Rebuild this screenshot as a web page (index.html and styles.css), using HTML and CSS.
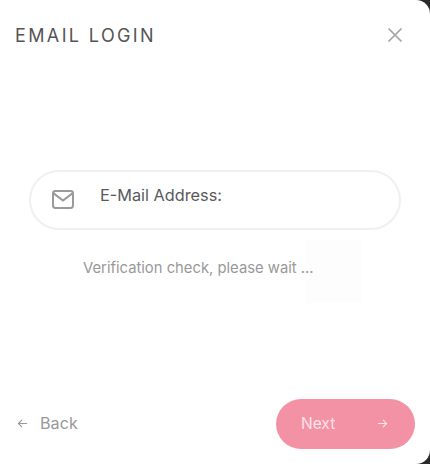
FILE: index.html
```html
<!DOCTYPE html>
<html lang="en">
<head>
<meta charset="utf-8">
<title>Email Login</title>
<link rel="stylesheet" href="styles.css">
</head>
<body>
<main class="modal">
  <header class="head">
    <h1 class="title">EMAIL LOGIN</h1>
    <button class="close" aria-label="Close">
      <svg class="close-icon" viewBox="0 0 16 16"><path d="M1.5 1.5l13 13M14.5 1.5l-13 13"/></svg>
    </button>
  </header>
  <section class="body">
    <div class="field">
      <svg class="mail-icon" viewBox="0 0 22 19"><rect x="1" y="1" width="20" height="17" rx="2.4"/><path d="M1.6 3.4L11 10.6l9.4-7.2"/></svg>
      <span class="label">E-Mail Address:</span>
    </div>
    <p class="status">Verification check, please wait ...</p>
    <div class="ghost"></div>
  </section>
  <footer class="foot">
    <button class="back">
      <svg class="arrow" viewBox="0 0 12 12"><path d="M11 6H1.5M5.5 2L1.5 6l4 4"/></svg>
      <span>Back</span>
    </button>
    <button class="next">
      <span>Next</span>
      <svg class="arrow" viewBox="0 0 12 12"><path d="M1 6h9.5M6.5 2l4 4-4 4"/></svg>
    </button>
  </footer>
</main>
</body>
</html>
```
FILE: styles.css
```css
* { box-sizing: border-box; }
html, body { margin: 0; height: 100%; }
body {
  background: #2b2b2b;
  font-family: Inter, "Open Sans", sans-serif;
  overflow: hidden;
}
.modal {
  width: 430px;
  height: 464px;
  background: #fff;
  border-radius: 0 14px 14px 0;
  display: flex;
  flex-direction: column;
}
.head {
  display: flex;
  justify-content: space-between;
  align-items: center;
  height: 24px;
  margin-top: 23px;
  padding: 0 27px 0 15px;
}
.title {
  margin: 0;
  font-size: 18px;
  font-weight: 400;
  letter-spacing: 2.38px;
  color: #555;
}
.close { border: 0; background: none; padding: 0; display: flex; }
.close-icon { width: 16px; height: 16px; fill: none; stroke: #a3a3a3; stroke-width: 1.7; }
.body {
  flex: 1;
  padding: 123px 29px 0;
  position: relative;
}
.field {
  height: 60px;
  border: 2px solid #f0f0f0;
  border-radius: 30px;
  display: flex;
  align-items: flex-start;
  padding: 13px 21px 0;
  gap: 26px;
}
.mail-icon { width: 22px; height: 19px; margin-top: 5px; fill: none; stroke: #9a9a9a; stroke-width: 2; flex: none; }
.label { font-size: 16.3px; font-weight: 400; color: #5a5a5a; line-height: 20px; }
.status { position: relative; z-index: 1; margin: 28px 0 0 54px; font-size: 14.8px; line-height: 20px; color: #999; }
.ghost {
  position: absolute;
  left: 305px;
  top: 193px;
  width: 56px;
  height: 63px;
  background: #fdfdfd;
}
.foot {
  display: flex;
  justify-content: space-between;
  align-items: center;
  padding: 0 15px 15px 17px;
}
.back {
  border: 0;
  background: none;
  padding: 0 0 2px;
  display: flex;
  align-items: center;
  gap: 12px;
  font: inherit;
  font-size: 16.2px;
  color: #999;
}
.arrow { width: 11px; height: 11px; fill: none; stroke: currentColor; stroke-width: 1.2; }
.next {
  width: 139px;
  height: 50px;
  border: 0;
  border-radius: 25px;
  background: #f492a5;
  color: #fce3e8;
  display: flex;
  align-items: center;
  justify-content: space-between;
  padding: 0 27px 2px 25px;
  font: inherit;
  font-size: 15.5px;
  font-weight: 400;
}
```
